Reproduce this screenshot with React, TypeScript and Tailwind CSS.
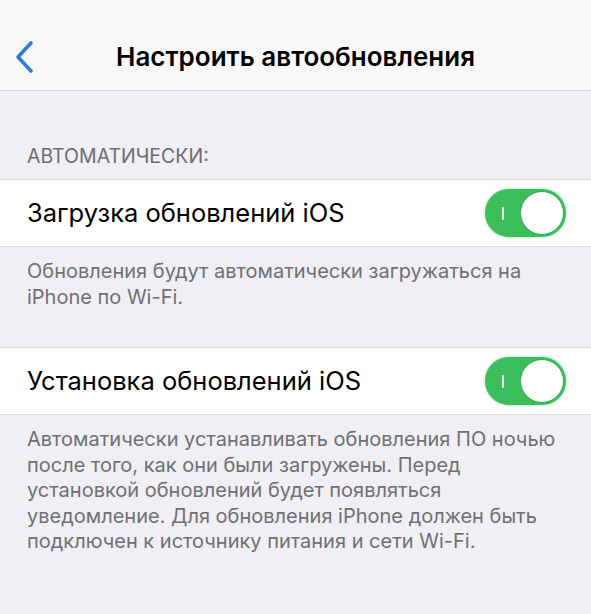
import React from "react";

function Toggle() {
  return (
    <div className="relative h-[48px] w-[81px] shrink-0 rounded-full bg-[#3dbe5c] shadow-[0_0_3px_rgba(61,190,92,0.55)]">
      <div className="absolute left-[17px] top-[18px] h-[13px] w-[2px] rounded-sm bg-white/90" />
      <div className="absolute right-[2px] top-[2px] h-[44px] w-[44px] rounded-full border border-[#35a852] bg-white" />
    </div>
  );
}

function Row({ label }: { label: string }) {
  return (
    <div className="flex h-[68px] items-center justify-between border-y border-[#dcdce0] bg-white pl-[27px] pr-[25px]">
      <span className="text-[25.5px] text-black">{label}</span>
      <Toggle />
    </div>
  );
}

export default function App() {
  return (
    <div
      className="h-[614px] w-[591px] overflow-hidden bg-[#efeff4]"
      style={{ fontFamily: "Inter, 'Noto Sans', sans-serif" }}
    >
      <header className="relative flex h-[91px] items-center justify-center border-b border-[#d6d6da] bg-[#f8f8f8] pt-[22px]">
        <svg
          className="absolute left-[13px] top-[40px]"
          width="22"
          height="34"
          viewBox="0 0 22 34"
          fill="none"
        >
          <path d="M18 3 L5 17 L18 31" stroke="#2f7bd8" strokeWidth="3.6" strokeLinecap="round" strokeLinejoin="round" />
        </svg>
        <h1 className="text-[26px] font-semibold text-black">Настроить автообновления</h1>
      </header>

      <div className="px-[27px] pb-[8px] pt-[51px] text-[19.5px] text-[#6d6d72]">АВТОМАТИЧЕСКИ:</div>
      <Row label="Загрузка обновлений iOS" />
      <p className="px-[27px] pb-[37px] pt-[11px] text-[20px] leading-[26px] text-[#707075]">
        Обновления будут автоматически загружаться на
        <br />
        iPhone по Wi-Fi.
      </p>
      <Row label="Установка обновлений iOS" />
      <p className="px-[27px] pt-[12px] text-[20px] leading-[25.5px] text-[#707075]">
        Автоматически устанавливать обновления ПО ночью
        <br />
        после того, как они были загружены. Перед
        <br />
        установкой обновлений будет появляться
        <br />
        уведомление. Для обновления iPhone должен быть
        <br />
        подключен к источнику питания и сети Wi-Fi.
      </p>
    </div>
  );
}
